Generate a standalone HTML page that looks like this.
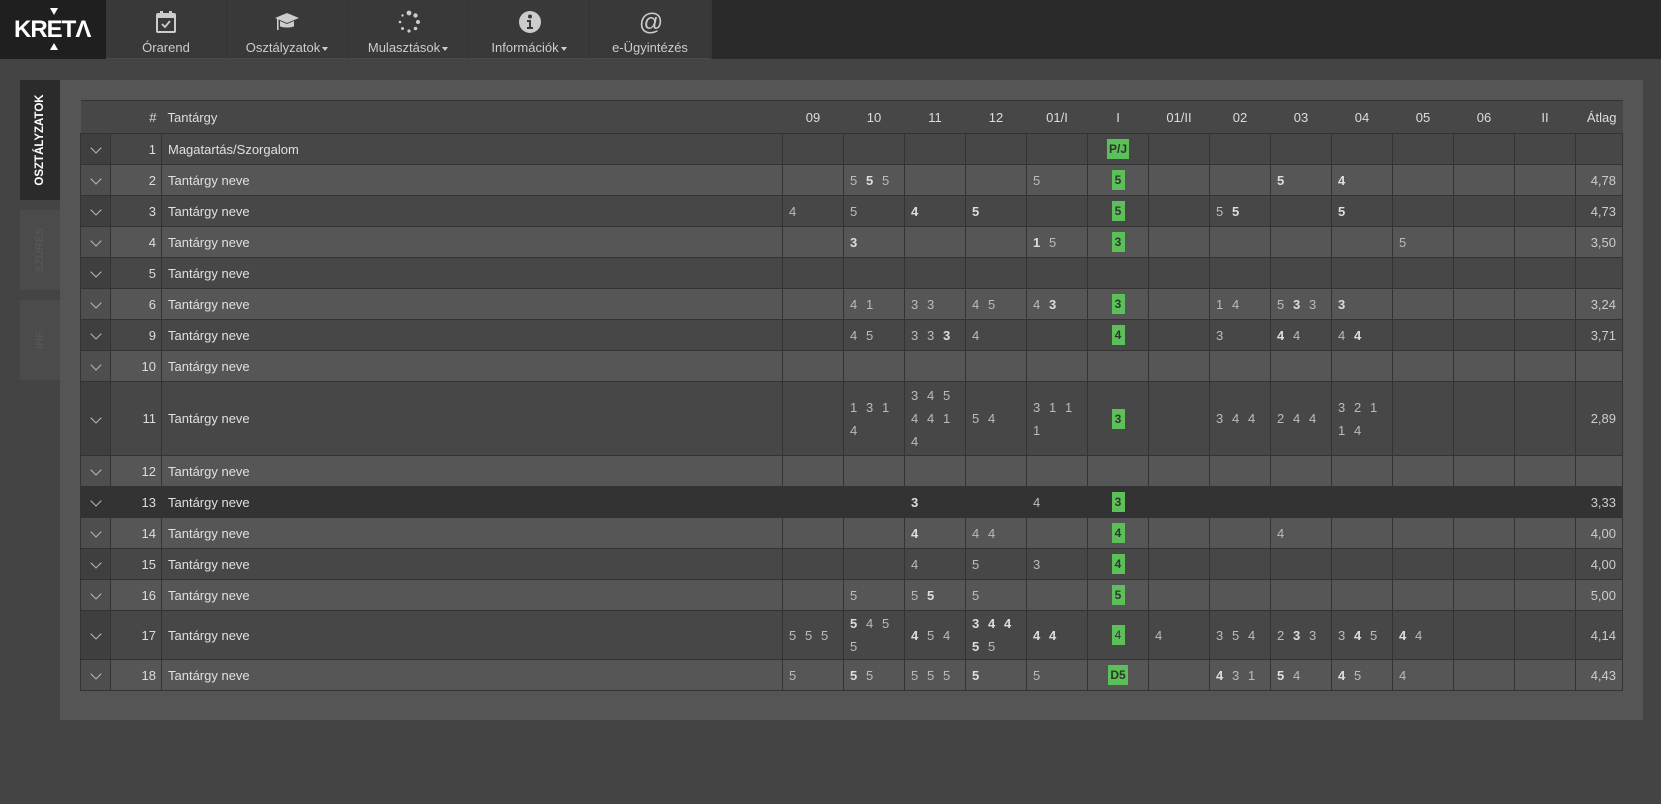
<!DOCTYPE html>
<html><head><meta charset="utf-8">
<style>
*{box-sizing:border-box;margin:0;padding:0}
body{width:1661px;height:804px;background:#444;font-family:"Liberation Sans",sans-serif;color:#ddd;overflow:hidden;position:relative}
#top{position:absolute;left:0;top:0;width:1661px;height:59px;background:#2a2a2a}
#logo{position:absolute;left:0;top:0;width:106px;height:59px;background:#1f1f1f}
#logo .t{position:absolute;left:14px;top:16px;font-size:24px;font-weight:bold;color:#fff;letter-spacing:-1px}
#logo .tr1{position:absolute;left:50px;top:8px;width:0;height:0;border-left:4px solid transparent;border-right:4px solid transparent;border-top:7px solid #fff}
#logo .tr2{position:absolute;left:50px;top:43px;width:0;height:0;border-left:4px solid transparent;border-right:4px solid transparent;border-bottom:7px solid #fff}
#nav{position:absolute;left:106px;top:0;width:606px;height:59px;background:#393939}
.ni{position:absolute;top:0;width:121px;height:59px;border-bottom:1px solid #4a4a4a;border-right:1px solid #333;text-align:center;color:#ccc;font-size:13px}
.ni svg{position:absolute;left:49px;top:10px}
.ni span{position:absolute;left:0;right:0;top:40px}
.car{display:inline-block;width:0;height:0;border-left:3.5px solid transparent;border-right:3.5px solid transparent;border-top:4px solid #ccc;vertical-align:middle;margin-left:2px}
#panel{position:absolute;left:60px;top:80px;width:1583px;height:640px;background:#555}
.tab{position:absolute;left:20px;width:40px;background:#4b4b4b}
.tab div{position:absolute;left:50%;top:50%;transform:translate(-50%,-50%) rotate(-90deg);white-space:nowrap;font-size:11px;font-weight:bold;color:#555}
#t1{top:80px;height:120px;background:#2b2b2b}
#t1 div{color:#fff;font-size:11.5px}
#t2{top:210px;height:80px}
#t3{top:300px;height:80px}
table{position:absolute;left:80px;top:100px;border-collapse:collapse;table-layout:fixed;width:1542px;font-size:13px}
td,th{border:1px solid #333;padding:0 6px;white-space:nowrap;overflow:hidden}
th{font-weight:normal;height:33px;background:#474747;color:#ddd;text-align:center;border-left:none;border-right:none}
tr{height:31px}
tr.d td{background:#474747}
tr.l td{background:#565656}
tr.h td{background:#333;border-left-color:#333;border-right-color:#333}
td.c{background:#3f3f3f!important;text-align:center;padding:0}
tr.l td.c{background:#4e4e4e!important}
td.n{text-align:right;padding-right:5px}
td.s{color:#e0e0e0}
td.g{white-space:normal;color:#bbb;line-height:23px;padding-right:0}
td.g i,td.g b{display:inline-block;width:16px;font-style:normal}
td.g b{color:#ddd}
td.x{text-align:center;padding:0}
.bd{display:inline-block;background:#5cbf5a;color:#2a3a2a;font-weight:bold;font-size:12px;height:20px;line-height:20px;padding:0 2px;min-width:13px}
td.a{text-align:right;color:#ccc}
.chev{display:inline-block;width:8px;height:8px;border-right:1.5px solid #bbb;border-bottom:1.5px solid #bbb;transform:rotate(45deg);margin-top:-4px;vertical-align:middle}
</style></head><body>
<div id="top">
 <div id="logo"><div class="tr1"></div><div class="t">KRETΛ</div><div class="tr2"></div></div>
 <div id="nav">
  <div class="ni" style="left:0"><svg width="22" height="24" viewBox="0 0 22 24"><rect x="2" y="4" width="18" height="18" rx="1" fill="none" stroke="#ccc" stroke-width="2"/><rect x="2" y="4" width="18" height="4" fill="#ccc"/><rect x="5" y="1" width="3" height="5" fill="#ccc"/><rect x="14" y="1" width="3" height="5" fill="#ccc"/><path d="M7 14l3 3 5-6" fill="none" stroke="#ccc" stroke-width="1.8"/></svg><span>Órarend</span></div>
  <div class="ni" style="left:121px"><svg width="26" height="24" viewBox="0 0 26 24" style="left:47px"><path d="M13 3L1 8l12 5 12-5z" fill="#ccc"/><path d="M6 11v5c0 2 14 2 14 0v-5l-7 3z" fill="#ccc"/><rect x="3" y="9" width="1.6" height="11" fill="#ccc"/></svg><span>Osztályzatok<i class="car"></i></span></div>
  <div class="ni" style="left:242px"><svg width="24" height="24" viewBox="0 0 24 24"><g fill="#ccc"><circle cx="12" cy="3" r="2.4"/><circle cx="18.5" cy="5.5" r="2.2"/><circle cx="21" cy="12" r="2"/><circle cx="18.5" cy="18.5" r="1.8"/><circle cx="12" cy="21" r="1.6"/><circle cx="5.5" cy="18.5" r="1.5"/><circle cx="3" cy="12" r="1.3"/><circle cx="5.5" cy="5.5" r="1.2"/></g></svg><span>Mulasztások<i class="car"></i></span></div>
  <div class="ni" style="left:363px"><svg width="24" height="24" viewBox="0 0 24 24"><circle cx="12" cy="12" r="11" fill="#ccc"/><circle cx="12" cy="6.5" r="2" fill="#393939"/><path d="M9 10h4v7h2v2H9v-2h2v-5H9z" fill="#393939"/></svg><span>Információk<i class="car"></i></span></div>
  <div class="ni" style="left:484px"><svg width="24" height="24" viewBox="0 0 24 24"><text x="12" y="20" font-size="24" text-anchor="middle" fill="#ccc" font-family="Liberation Sans">@</text></svg><span>e-Ügyintézés</span></div>
 </div>
</div>
<div id="panel"></div>
<div class="tab" id="t1"><div>OSZTÁLYZATOK</div></div>
<div class="tab" id="t2"><div>SZÜRES</div></div>
<div class="tab" id="t3"><div>INF</div></div>
<table>
<colgroup><col style="width:30px"><col style="width:51px"><col style="width:621px"><col span="13" style="width:61px"><col style="width:47px"></colgroup>
<tr><th></th><th style="text-align:right;padding-right:5px">#</th><th style="text-align:left">Tantárgy</th><th>09</th><th>10</th><th>11</th><th>12</th><th>01/I</th><th>I</th><th>01/II</th><th>02</th><th>03</th><th>04</th><th>05</th><th>06</th><th>II</th><th style="text-align:right">Átlag</th></tr>
<tr class="d"><td class="c"><i class="chev"></i></td><td class="n">1</td><td class="s">Magatartás/Szorgalom</td><td class="g"></td><td class="g"></td><td class="g"></td><td class="g"></td><td class="g"></td><td class="x"><span class="bd">P/J</span></td><td class="g"></td><td class="g"></td><td class="g"></td><td class="g"></td><td class="g"></td><td class="g"></td><td class="g"></td><td class="a"></td></tr>
<tr class="l"><td class="c"><i class="chev"></i></td><td class="n">2</td><td class="s">Tantárgy neve</td><td class="g"></td><td class="g"><i>5</i><b>5</b><i>5</i></td><td class="g"></td><td class="g"></td><td class="g"><i>5</i></td><td class="x"><span class="bd">5</span></td><td class="g"></td><td class="g"></td><td class="g"><b>5</b></td><td class="g"><b>4</b></td><td class="g"></td><td class="g"></td><td class="g"></td><td class="a">4,78</td></tr>
<tr class="d"><td class="c"><i class="chev"></i></td><td class="n">3</td><td class="s">Tantárgy neve</td><td class="g"><i>4</i></td><td class="g"><i>5</i></td><td class="g"><b>4</b></td><td class="g"><b>5</b></td><td class="g"></td><td class="x"><span class="bd">5</span></td><td class="g"></td><td class="g"><i>5</i><b>5</b></td><td class="g"></td><td class="g"><b>5</b></td><td class="g"></td><td class="g"></td><td class="g"></td><td class="a">4,73</td></tr>
<tr class="l"><td class="c"><i class="chev"></i></td><td class="n">4</td><td class="s">Tantárgy neve</td><td class="g"></td><td class="g"><b>3</b></td><td class="g"></td><td class="g"></td><td class="g"><b>1</b><i>5</i></td><td class="x"><span class="bd">3</span></td><td class="g"></td><td class="g"></td><td class="g"></td><td class="g"></td><td class="g"><i>5</i></td><td class="g"></td><td class="g"></td><td class="a">3,50</td></tr>
<tr class="d"><td class="c"><i class="chev"></i></td><td class="n">5</td><td class="s">Tantárgy neve</td><td class="g"></td><td class="g"></td><td class="g"></td><td class="g"></td><td class="g"></td><td class="x"></td><td class="g"></td><td class="g"></td><td class="g"></td><td class="g"></td><td class="g"></td><td class="g"></td><td class="g"></td><td class="a"></td></tr>
<tr class="l"><td class="c"><i class="chev"></i></td><td class="n">6</td><td class="s">Tantárgy neve</td><td class="g"></td><td class="g"><i>4</i><i>1</i></td><td class="g"><i>3</i><i>3</i></td><td class="g"><i>4</i><i>5</i></td><td class="g"><i>4</i><b>3</b></td><td class="x"><span class="bd">3</span></td><td class="g"></td><td class="g"><i>1</i><i>4</i></td><td class="g"><i>5</i><b>3</b><i>3</i></td><td class="g"><b>3</b></td><td class="g"></td><td class="g"></td><td class="g"></td><td class="a">3,24</td></tr>
<tr class="d"><td class="c"><i class="chev"></i></td><td class="n">9</td><td class="s">Tantárgy neve</td><td class="g"></td><td class="g"><i>4</i><i>5</i></td><td class="g"><i>3</i><i>3</i><b>3</b></td><td class="g"><i>4</i></td><td class="g"></td><td class="x"><span class="bd">4</span></td><td class="g"></td><td class="g"><i>3</i></td><td class="g"><b>4</b><i>4</i></td><td class="g"><i>4</i><b>4</b></td><td class="g"></td><td class="g"></td><td class="g"></td><td class="a">3,71</td></tr>
<tr class="l"><td class="c"><i class="chev"></i></td><td class="n">10</td><td class="s">Tantárgy neve</td><td class="g"></td><td class="g"></td><td class="g"></td><td class="g"></td><td class="g"></td><td class="x"></td><td class="g"></td><td class="g"></td><td class="g"></td><td class="g"></td><td class="g"></td><td class="g"></td><td class="g"></td><td class="a"></td></tr>
<tr class="d" style="height:74px"><td class="c"><i class="chev"></i></td><td class="n">11</td><td class="s">Tantárgy neve</td><td class="g"></td><td class="g"><i>1</i><i>3</i><i>1</i><i>4</i></td><td class="g"><i>3</i><i>4</i><i>5</i><i>4</i><i>4</i><i>1</i><i>4</i></td><td class="g"><i>5</i><i>4</i></td><td class="g"><i>3</i><i>1</i><i>1</i><i>1</i></td><td class="x"><span class="bd">3</span></td><td class="g"></td><td class="g"><i>3</i><i>4</i><i>4</i></td><td class="g"><i>2</i><i>4</i><i>4</i></td><td class="g"><i>3</i><i>2</i><i>1</i><i>1</i><i>4</i></td><td class="g"></td><td class="g"></td><td class="g"></td><td class="a">2,89</td></tr>
<tr class="l"><td class="c"><i class="chev"></i></td><td class="n">12</td><td class="s">Tantárgy neve</td><td class="g"></td><td class="g"></td><td class="g"></td><td class="g"></td><td class="g"></td><td class="x"></td><td class="g"></td><td class="g"></td><td class="g"></td><td class="g"></td><td class="g"></td><td class="g"></td><td class="g"></td><td class="a"></td></tr>
<tr class="h"><td class="c" style="background:#333!important"><i class="chev"></i></td><td class="n">13</td><td class="s">Tantárgy neve</td><td class="g"></td><td class="g"></td><td class="g"><b>3</b></td><td class="g"></td><td class="g"><i>4</i></td><td class="x"><span class="bd">3</span></td><td class="g"></td><td class="g"></td><td class="g"></td><td class="g"></td><td class="g"></td><td class="g"></td><td class="g"></td><td class="a">3,33</td></tr>
<tr class="l"><td class="c"><i class="chev"></i></td><td class="n">14</td><td class="s">Tantárgy neve</td><td class="g"></td><td class="g"></td><td class="g"><b>4</b></td><td class="g"><i>4</i><i>4</i></td><td class="g"></td><td class="x"><span class="bd">4</span></td><td class="g"></td><td class="g"></td><td class="g"><i>4</i></td><td class="g"></td><td class="g"></td><td class="g"></td><td class="g"></td><td class="a">4,00</td></tr>
<tr class="d"><td class="c"><i class="chev"></i></td><td class="n">15</td><td class="s">Tantárgy neve</td><td class="g"></td><td class="g"></td><td class="g"><i>4</i></td><td class="g"><i>5</i></td><td class="g"><i>3</i></td><td class="x"><span class="bd">4</span></td><td class="g"></td><td class="g"></td><td class="g"></td><td class="g"></td><td class="g"></td><td class="g"></td><td class="g"></td><td class="a">4,00</td></tr>
<tr class="l"><td class="c"><i class="chev"></i></td><td class="n">16</td><td class="s">Tantárgy neve</td><td class="g"></td><td class="g"><i>5</i></td><td class="g"><i>5</i><b>5</b></td><td class="g"><i>5</i></td><td class="g"></td><td class="x"><span class="bd">5</span></td><td class="g"></td><td class="g"></td><td class="g"></td><td class="g"></td><td class="g"></td><td class="g"></td><td class="g"></td><td class="a">5,00</td></tr>
<tr class="d" style="height:49px"><td class="c"><i class="chev"></i></td><td class="n">17</td><td class="s">Tantárgy neve</td><td class="g"><i>5</i><i>5</i><i>5</i></td><td class="g"><b>5</b><i>4</i><i>5</i><i>5</i></td><td class="g"><b>4</b><i>5</i><i>4</i></td><td class="g"><b>3</b><b>4</b><b>4</b><b>5</b><i>5</i></td><td class="g"><b>4</b><b>4</b></td><td class="x"><span class="bd" style="font-weight:normal;color:#2a3a2a">4</span></td><td class="g"><i>4</i></td><td class="g"><i>3</i><i>5</i><i>4</i></td><td class="g"><i>2</i><b>3</b><i>3</i></td><td class="g"><i>3</i><b>4</b><i>5</i></td><td class="g"><b>4</b><i>4</i></td><td class="g"></td><td class="g"></td><td class="a">4,14</td></tr>
<tr class="l"><td class="c"><i class="chev"></i></td><td class="n">18</td><td class="s">Tantárgy neve</td><td class="g"><i>5</i></td><td class="g"><b>5</b><i>5</i></td><td class="g"><i>5</i><i>5</i><i>5</i></td><td class="g"><b>5</b></td><td class="g"><i>5</i></td><td class="x"><span class="bd">D5</span></td><td class="g"></td><td class="g"><b>4</b><i>3</i><i>1</i></td><td class="g"><b>5</b><i>4</i></td><td class="g"><b>4</b><i>5</i></td><td class="g"><i>4</i></td><td class="g"></td><td class="g"></td><td class="a">4,43</td></tr>
</table>
</body></html>
